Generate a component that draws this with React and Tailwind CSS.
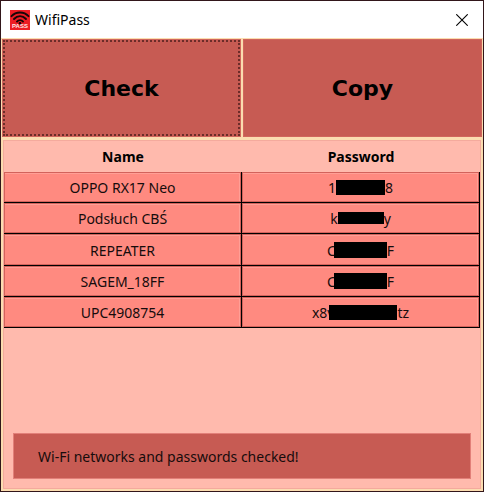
const networks = [
  { name: 'OPPO RX17 Neo', start: '1', end: '8', mask: 'h-[15px] w-[49px]', row: 'h-[31px]' },
  { name: 'Podsłuch CBŚ', start: 'k', end: 'y', mask: 'h-3 w-[46px]', row: 'h-[31px]' },
  { name: 'REPEATER', start: 'C', end: 'F', mask: '-ml-0.5 h-4 w-[53px]', row: 'h-8' },
  { name: 'SAGEM_18FF', start: 'C', end: 'F', mask: '-ml-0.5 h-4 w-[53px]', row: 'h-[31px]' },
  { name: 'UPC4908754', start: 'x8v', end: 'tz', mask: '-ml-[5px] h-[15px] w-[68px]', row: 'h-[31px]' },
];

function AppIcon() {
  return (
    <svg className="size-5 shrink-0" viewBox="0 0 20 20" aria-hidden="true">
      <rect width="20" height="20" fill="#ed1c24" />
      <g fill="none" stroke="#160708" strokeWidth="1.900" strokeLinecap="round">
        <path d="M1.500 6.200C6 1.200 14 1.200 18.500 6.200" />
        <path d="M4 9C7.500 5.100 12.500 5.100 16 9" />
        <path d="M7 11.600C8.500 9.600 11.500 9.600 13 11.600" />
      </g>
      <circle cx="10" cy="13.200" r="1.300" fill="#160708" />
      <text x="10" y="18" textAnchor="middle" fontFamily="Liberation Sans, sans-serif" fontWeight="700" fontSize="6" fill="#ffe9e9">
        PASS
      </text>
    </svg>
  );
}

function Cell({ children, className }) {
  return (
    <td className={`border-b border-black p-0 ${className}`}>
      <div className="flex h-full items-center justify-center border border-[#d3625b] shadow-[inset_-1px_1px_0_#ff9f96]">
        {children}
      </div>
    </td>
  );
}

export default function App() {
  return (
    <div className="flex h-screen flex-col border border-[#32161a] bg-[#fbdcb0] font-['Noto_Sans','Open_Sans',sans-serif] text-sm text-[#160c0c]">
      <header className="flex h-[37px] shrink-0 items-center gap-[5px] bg-white pr-[11px] pl-[9px] text-black">
        <AppIcon />
        <h1 className="flex-1">WifiPass</h1>
        <button type="button" aria-label="Close" className="flex size-5 items-center justify-center">
          <svg className="size-3" viewBox="0 0 12 12" fill="none" stroke="#000" strokeWidth="1.100">
            <path d="M.3.3 11.700 11.700M11.700.3.3 11.700" />
          </svg>
        </button>
      </header>
      <main className="flex flex-1 flex-col px-px pt-px pb-0.5">
        <div className="grid h-[98px] shrink-0 grid-cols-2 gap-0.5 font-['DejaVu_Sans',Verdana,sans-serif] text-[22px] font-bold text-black">
          <button type="button" className="border border-[#d0665c] bg-[#c75b53]">
            <span className="flex h-full items-center justify-center border-2 border-dotted border-[#6b2c29] pt-0.5">Check</span>
          </button>
          <button type="button" className="border border-[#d0665c] bg-[#c75b53] pt-0.5">Copy</button>
        </div>
        <section className="mt-[3px] mr-px ml-px flex flex-1 flex-col border border-[#f4aa9d] bg-[#ffbaad]">
          <table className="w-full table-fixed border-separate border-spacing-0">
            <thead>
              <tr className="h-[31px] text-black">
                <th className="p-0 font-bold">Name</th>
                <th className="p-0 font-bold">Password</th>
              </tr>
            </thead>
            <tbody className="bg-[#ff8a80]">
              {networks.map((network) => (
                <tr key={network.name} className={network.row}>
                  <Cell className="h-px border-r">
                    <span className="pt-0.5">{network.name}</span>
                  </Cell>
                  <Cell className="h-px border-r">
                    <span className="pt-0.5">{network.start}</span>
                    <span className={`z-10 bg-black ${network.mask}`} />
                    <span className="pt-0.5">{network.end}</span>
                  </Cell>
                </tr>
              ))}
            </tbody>
          </table>
          <p role="status" className="mx-[9px] mt-auto mb-[9px] flex h-[46px] items-center border border-[#e28079] bg-[#c75b53] px-6 pt-0.5">
            Wi-Fi networks and passwords checked!
          </p>
        </section>
      </main>
    </div>
  );
}
